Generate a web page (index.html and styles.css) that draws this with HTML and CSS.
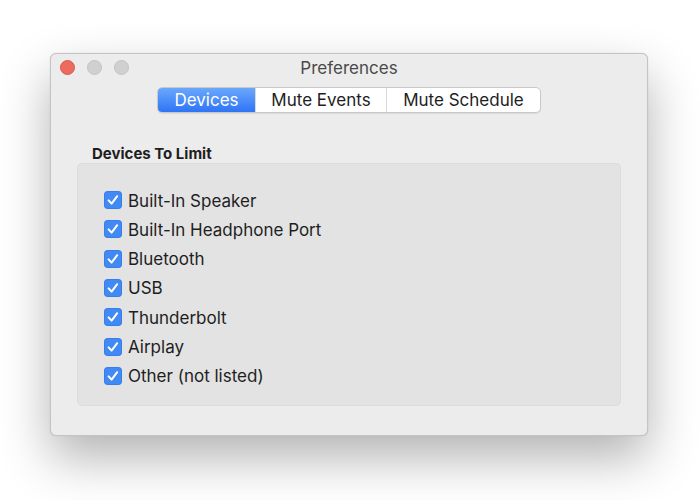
FILE: index.html
```html
<!DOCTYPE html>
<html>
<head>
<meta charset="utf-8">
<link rel="stylesheet" href="styles.css">
</head>
<body>
<div class="window">
  <div class="titlebar">
    <div class="lights">
      <span class="light red"></span>
      <span class="light gray"></span>
      <span class="light gray"></span>
    </div>
    <div class="title">Preferences</div>
  </div>
  <div class="tabs-row">
    <div class="seg">
      <div class="seg-item active w1">Devices</div>
      <div class="seg-item w2">Mute Events</div>
      <div class="seg-item w3">Mute Schedule</div>
    </div>
  </div>
  <div class="section-label">Devices To Limit</div>
  <div class="group">
    <div class="row"><span class="cb"><svg viewBox="0 0 18 18" width="18" height="18"><path d="M4.6 9.4 L7.6 12.6 L13.2 5.2" fill="none" stroke="#fff" stroke-width="2" stroke-linecap="round" stroke-linejoin="round"/></svg></span><span class="lbl">Built-In Speaker</span></div>
    <div class="row"><span class="cb"><svg viewBox="0 0 18 18" width="18" height="18"><path d="M4.6 9.4 L7.6 12.6 L13.2 5.2" fill="none" stroke="#fff" stroke-width="2" stroke-linecap="round" stroke-linejoin="round"/></svg></span><span class="lbl">Built-In Headphone Port</span></div>
    <div class="row"><span class="cb"><svg viewBox="0 0 18 18" width="18" height="18"><path d="M4.6 9.4 L7.6 12.6 L13.2 5.2" fill="none" stroke="#fff" stroke-width="2" stroke-linecap="round" stroke-linejoin="round"/></svg></span><span class="lbl">Bluetooth</span></div>
    <div class="row"><span class="cb"><svg viewBox="0 0 18 18" width="18" height="18"><path d="M4.6 9.4 L7.6 12.6 L13.2 5.2" fill="none" stroke="#fff" stroke-width="2" stroke-linecap="round" stroke-linejoin="round"/></svg></span><span class="lbl">USB</span></div>
    <div class="row"><span class="cb"><svg viewBox="0 0 18 18" width="18" height="18"><path d="M4.6 9.4 L7.6 12.6 L13.2 5.2" fill="none" stroke="#fff" stroke-width="2" stroke-linecap="round" stroke-linejoin="round"/></svg></span><span class="lbl">Thunderbolt</span></div>
    <div class="row"><span class="cb"><svg viewBox="0 0 18 18" width="18" height="18"><path d="M4.6 9.4 L7.6 12.6 L13.2 5.2" fill="none" stroke="#fff" stroke-width="2" stroke-linecap="round" stroke-linejoin="round"/></svg></span><span class="lbl">Airplay</span></div>
    <div class="row"><span class="cb"><svg viewBox="0 0 18 18" width="18" height="18"><path d="M4.6 9.4 L7.6 12.6 L13.2 5.2" fill="none" stroke="#fff" stroke-width="2" stroke-linecap="round" stroke-linejoin="round"/></svg></span><span class="lbl">Other (not listed)</span></div>
  </div>
</div>
</body>
</html>
```
FILE: styles.css
```css
html, body {
  margin: 0;
  padding: 0;
  background: #ffffff;
}
body {
  width: 700px;
  height: 500px;
  overflow: hidden;
  font-family: Inter, "Liberation Sans", Arial, sans-serif;
  color: #1e1e1e;
}
.window {
  box-sizing: border-box;
  margin: 53px 0 0 50px;
  width: 598px;
  height: 383px;
  background: #ececec;
  border: 1px solid #c4c4c4;
  border-radius: 6px;
  box-shadow: 0 22px 50px rgba(0,0,0,0.3), 0 0 1px rgba(0,0,0,0.2);
  display: flex;
  flex-direction: column;
}
.titlebar {
  position: relative;
  height: 32px;
  display: flex;
  align-items: center;
  justify-content: center;
}
.lights {
  position: absolute;
  left: 9px;
  top: 6px;
  display: flex;
  gap: 12px;
}
.light {
  width: 15px;
  height: 15px;
  border-radius: 50%;
  box-sizing: border-box;
}
.light.red {
  background: #ed6a5e;
  border: 1px solid #d9584c;
}
.light.gray {
  background: #d0d0d0;
  border: 1px solid #c3c3c3;
}
.title {
  font-size: 17px;
  color: #4a4a4a;
  margin-top: -4px;
}
.tabs-row {
  display: flex;
  justify-content: center;
  margin-top: 1px;
}
.seg {
  display: flex;
  height: 26px;
  box-sizing: border-box;
  border: 1px solid #c9c9c9;
  border-radius: 5px;
  background: #ffffff;
  box-shadow: 0 1px 1px rgba(0,0,0,0.08);
  overflow: hidden;
}
.seg-item {
  display: flex;
  align-items: center;
  justify-content: center;
  font-size: 17px;
  color: #1e1e1e;
  box-sizing: border-box;
  border-left: 1px solid #dadada;
}
.seg-item:first-child { border-left: none; }
.seg-item.active {
  background: linear-gradient(#6aa8fb, #2f74f6);
  color: #ffffff;
}
.w1 { width: 97px; }
.w2 { width: 131px; }
.w3 { width: 154px; }
.section-label {
  font-size: 15px;
  font-weight: 700;
  color: #1e1e1e;
  margin: 32px 0 0 41px;
  line-height: 18px;
}
.group {
  margin: 0 26px 0 26px;
  height: 243px;
  box-sizing: border-box;
  background: #e3e3e3;
  border: 1px solid #dcdcdc;
  border-radius: 5px;
  padding: 27px 0 0 26px;
  display: flex;
  flex-direction: column;
  gap: 11.33px;
}
.row {
  display: flex;
  align-items: center;
  height: 18px;
}
.cb {
  width: 18px;
  height: 18px;
  border-radius: 4px;
  background: #4189f4;
  box-shadow: inset 0 0 0 1px rgba(30,90,200,0.25);
  display: flex;
  margin-right: 6px;
}
.lbl {
  font-size: 17px;
  color: #1e1e1e;
  margin-top: 1px;
}
```
